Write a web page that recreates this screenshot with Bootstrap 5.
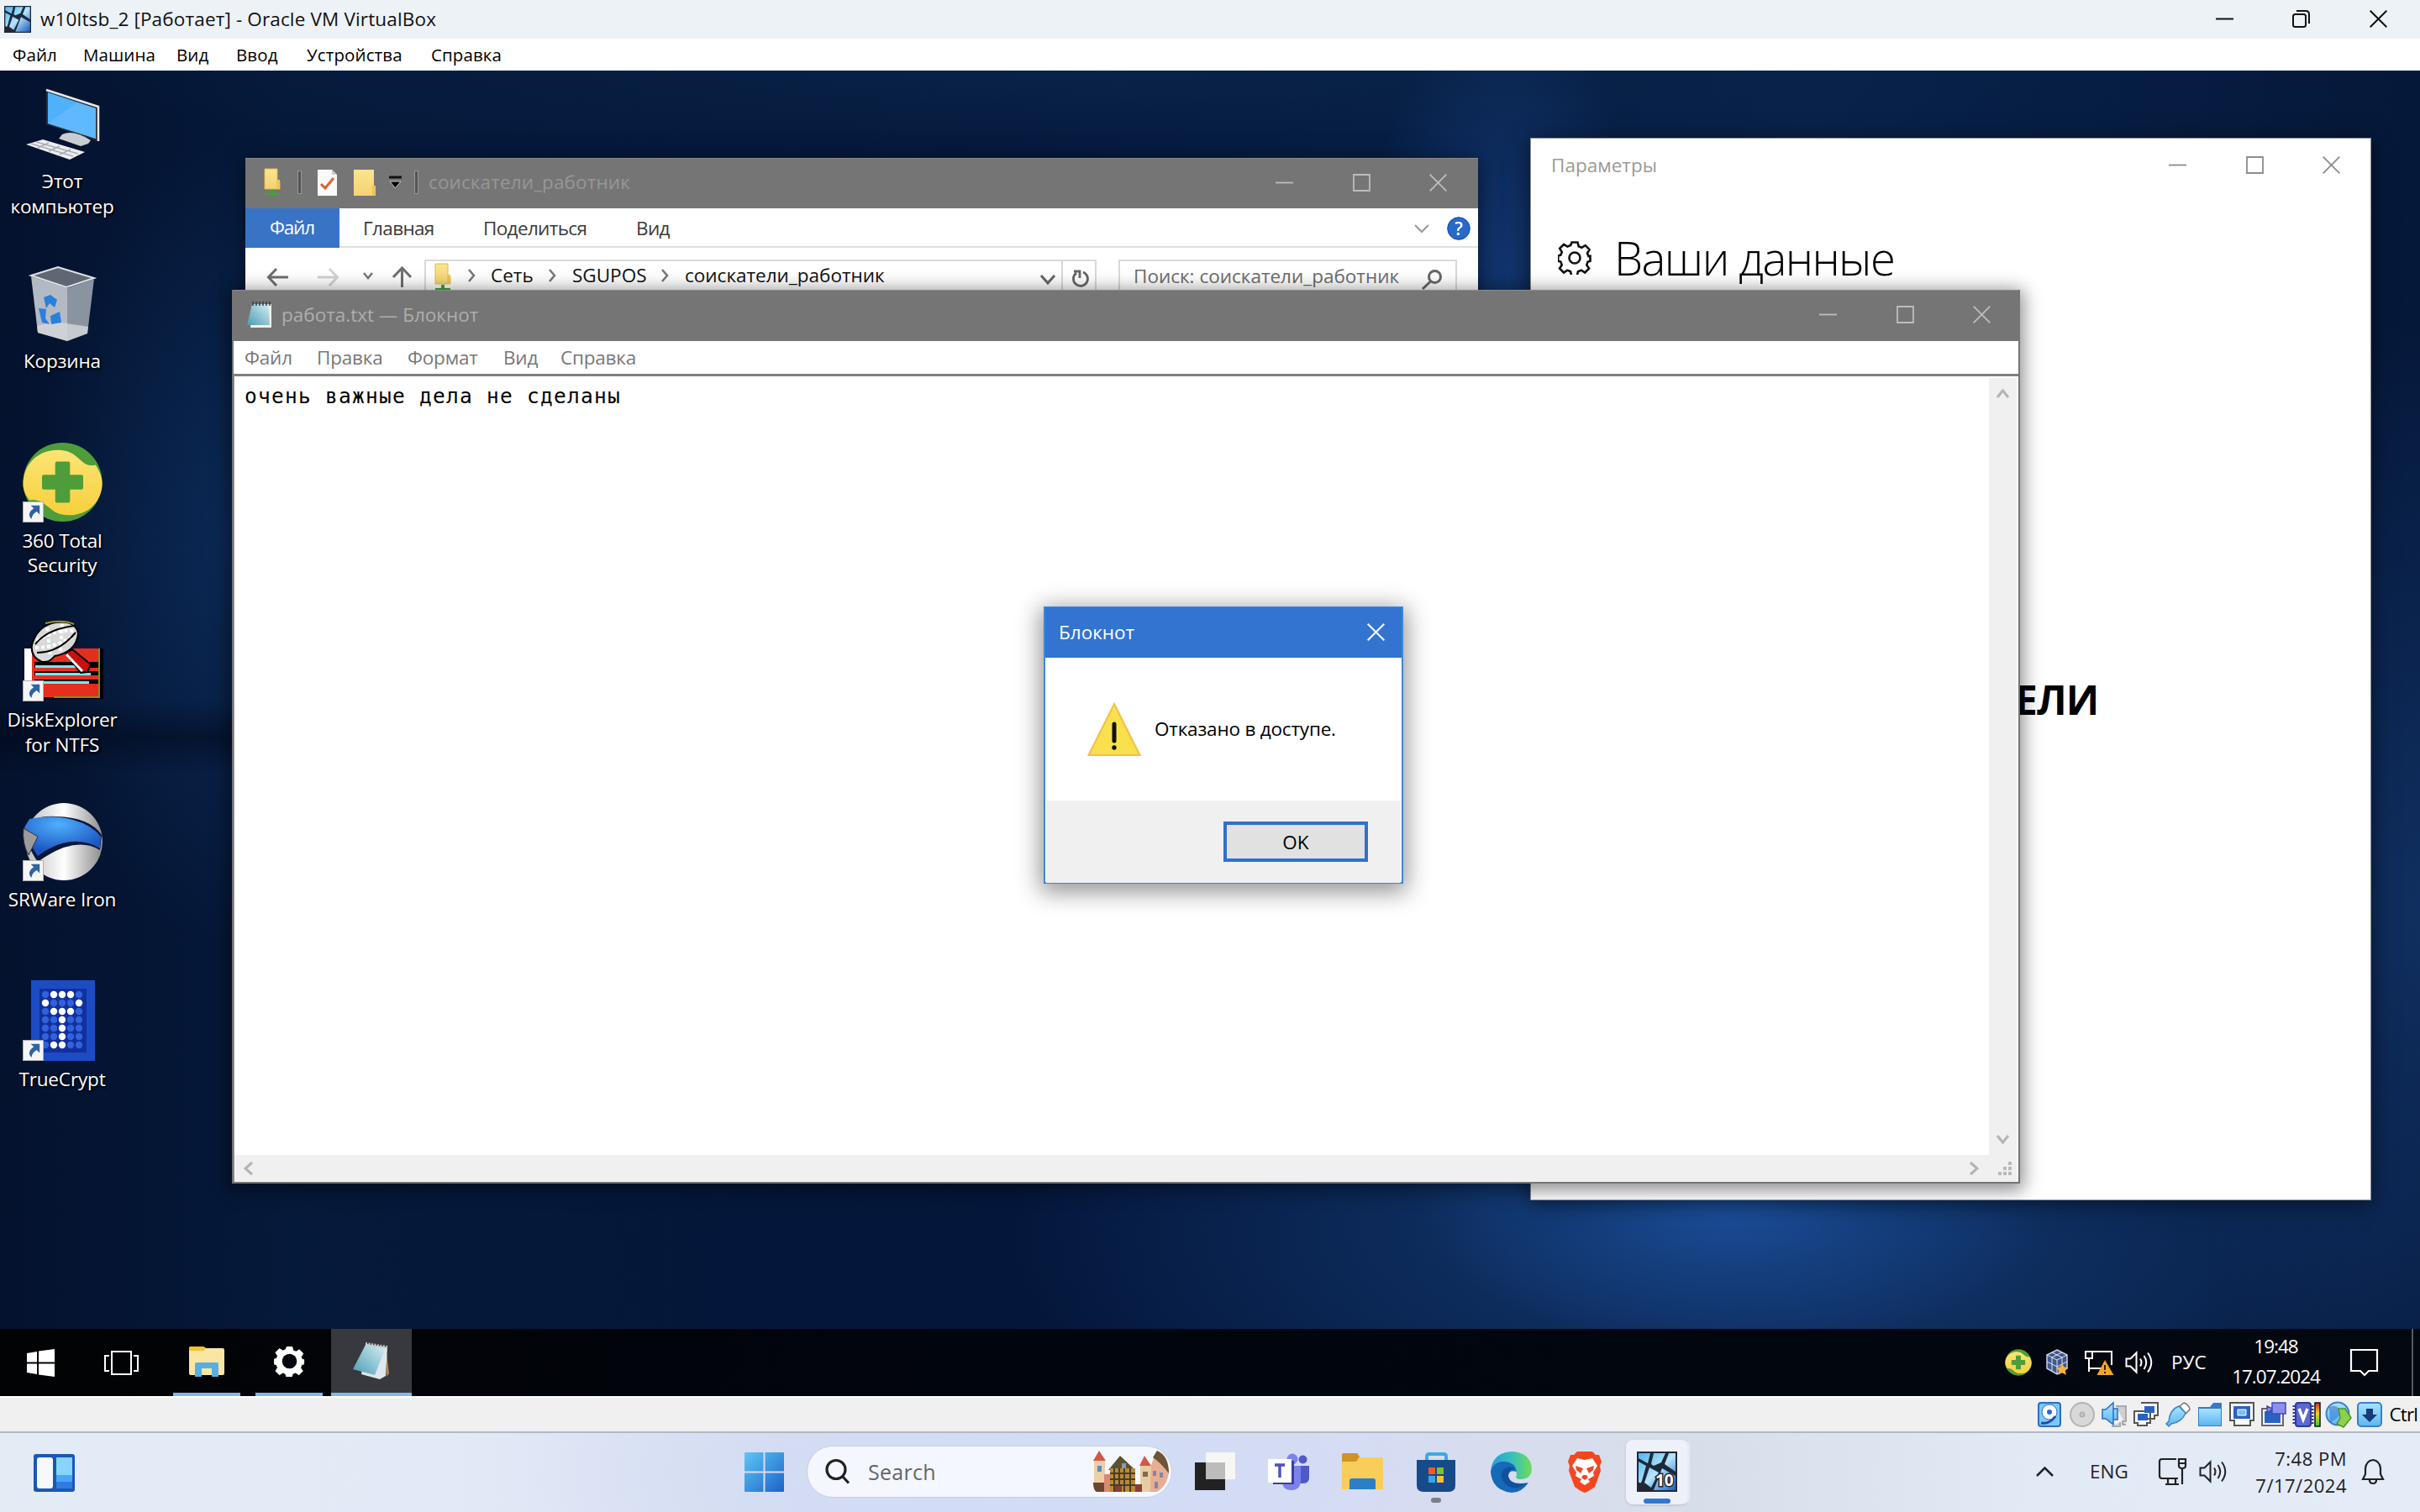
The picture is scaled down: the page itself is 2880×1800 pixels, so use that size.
<!DOCTYPE html>
<html lang="ru">
<head>
<meta charset="utf-8">
<title>w10ltsb_2 [Работает] - Oracle VM VirtualBox</title>
<link rel="stylesheet" href="https://cdn.jsdelivr.net/npm/bootstrap@5.3.0/dist/css/bootstrap.min.css">
<style>
body{width:2880px;height:1800px;overflow:hidden;font-family:"Open Sans","Noto Sans",sans-serif;font-size:22.5px;line-height:1.3;color:#111;letter-spacing:0}
svg{display:block;overflow:visible}
.rowgrid{display:grid;align-items:center;justify-items:start;white-space:nowrap}
.host-title{height:46px;background:#edf2f7;padding-left:5px;grid-template-columns:43px 2589px 91px 92px 30px;font-size:22.5px;letter-spacing:.15px;padding-bottom:1px}
.host-menu{height:38px;background:#fff;padding-left:15px;grid-template-columns:84px 111px 71px 84px 148px 100px;font-size:20.5px;letter-spacing:.1px;color:#000}
.desk{height:1498px;background:
 linear-gradient(180deg,transparent 50%,rgba(0,6,20,.45) 53%,transparent 56%) 0 0/290px 100% no-repeat,
 radial-gradient(ellipse 380px 180px at 2060px 1345px,#1c4f9c 0,rgba(24,70,140,.6) 45%,transparent 100%),
 radial-gradient(ellipse 900px 330px at 2100px 1380px,#12376f 0,transparent 100%),
 radial-gradient(ellipse 160px 330px at 1790px 240px,#12356e 0,transparent 100%),
 radial-gradient(ellipse 240px 480px at 280px 560px,#0b2955 0,transparent 100%),
 radial-gradient(ellipse 300px 700px at 2880px 1000px,#102f60 0,transparent 100%),
 radial-gradient(ellipse 1200px 120px at 1300px 0px,#092347 0,transparent 100%),
 linear-gradient(90deg,#04122e 0,#05193a 12%,#04163a 40%,#08224a 75%,#05183a 100%)}
.deskicons{position:absolute;left:0;top:14px;width:148px}
.deskcell{height:213.8px}
.deskcell .pic{height:96px;width:148px}
.deskcell .cap{margin-top:7px;line-height:29.5px;color:#fff;text-align:center;text-shadow:1px 2px 3px #000,0 0 3px #000;white-space:nowrap;letter-spacing:-.15px}
.win{position:absolute;background:#fff}
.winbtns{gap:70.5px;margin-left:auto;stroke:#bdbdbd;fill:none;stroke-width:1.8}
.w-exp{left:292px;top:104px;width:1467px;height:250px;box-shadow:0 4px 22px rgba(0,0,0,.5)}
.w-exp .winbtns{padding-right:37px}
.graybar{background:#757575;height:60px;border-top:1px solid #8b8b8b;padding-bottom:3px}
.exp-title{grid-template-columns:41px 24px 43px 42px 30px 17px 1fr auto;padding-left:21px;color:#979797;letter-spacing:.12px}
.exp-tabs{height:47px;border-bottom:2px solid #dfe0e0;grid-template-columns:140px 143px 182px 926px 39px 30px;color:#3a3a3a;letter-spacing:-.65px}
.exp-tabs .filetab{background:#3873c6;color:#fff;width:112px;height:47px;line-height:45px;padding-left:29px;letter-spacing:-1.2px}
.exp-nav{padding-left:26px;padding-top:14px;grid-template-columns:60px 54px 34px 39px 826px 403px;align-items:start}
.exp-nav>svg{margin-top:-1px}
.boxed{border:2px solid #d9d9d9;height:60px}
.addr{width:800px;grid-template-columns:40px 28px 68px 29px 105px 29px 423px 26px 24px;padding-left:9px;align-items:start;color:#111}
.addr>*{margin-top:2px}
.srchbox{width:403px;padding:3px 16px 0 16px;color:#6d6d6d}
.srchbox svg{margin-top:7px}
.w-note{left:276px;top:261px;width:2128px;height:1064px;box-shadow:0 4px 20px 4px rgba(0,0,0,.45);border:2px solid #757575;border-top:0}
.w-note .winbtns{padding-right:33px}
.note-title{grid-template-columns:41px 1fr auto;padding-left:16px;height:61px;color:#aeaeae}
.note-menu{height:39px;grid-template-columns:86px 108px 114px 68px 100px;padding-left:13px;color:#777;letter-spacing:-.2px}
.note-edit{border-top:3px solid #808080;height:962px;border-left:1px solid #9a9a9a}
.mono{font-family:"DejaVu Sans Mono",monospace;font-size:24.5px;letter-spacing:1.25px;color:#000;padding:4px 0 0 12px;line-height:40px}
.vscr{width:33px;background:#f0f0f0;margin-top:2px;margin-right:2px}
.hscr{height:32px;background:#f0f0f0;margin-right:2px;padding-bottom:1px}
.w-set{left:1821px;top:80px;width:1001px;height:1265px;border:1px solid #8c8f94;box-shadow:0 4px 24px rgba(0,0,0,.5)}
.set-title{height:66px;padding:0 0 3px 24px;color:#999}
.set-title .winbtns{stroke:#8c8c8c;padding-right:36px}
.set-head{margin-top:41px;padding-left:32px;grid-template-columns:67px 400px}
.bigtxt{font-size:54.5px;font-weight:300;letter-spacing:-1.6px;line-height:70px;color:#000}
.eli{font-size:48px;font-weight:700;letter-spacing:-.9px;line-height:60px;margin:461px 0 0 576px;color:#000}
.w-dlg{left:1242px;top:638px;width:428px;height:330px;border:2px solid #3f86d6;box-shadow:0 6px 26px 4px rgba(0,0,0,.42);color:#000}
.dlg-title{height:60px;background:#3274d0;color:#fff;grid-template-columns:367px 30px;padding-left:16px;margin-top:-1px;padding-bottom:1px}
.dlg-body{height:170px;grid-template-columns:80px 1fr;padding-left:50px;letter-spacing:-.2px}
.dlg-foot{background:#f0f0f0;height:98px;margin:0 1px;padding:25px 39px 0 0}
.okb{width:172px;height:48px;border:4px solid #3071cd;background:#e1e1e1;line-height:37px;text-align:center;padding:0;border-radius:0;font-size:22.5px;color:#000}
.vmbar{height:80px;background:linear-gradient(90deg,#020304,#01050e 40%,#02060f 80%,#04080f);color:#fff}
.vmleft{grid-template-columns:92px 82px 98px 90px 96px;padding-left:32px;height:80px}
.tsk{height:80px;display:flex;align-items:center;justify-content:center;border-bottom:4px solid #82b6ee;width:80px}
.tsk.on{background:#37393e;width:96px}
.vmright{grid-template-columns:49px 46px 48px 55px 72px 141px 73px 10px;height:80px;color:#fff}
.clk{line-height:36px;text-align:center;width:105px;letter-spacing:-1px;padding-bottom:2px}
.stat{height:42px;background:#f0f0f0;border-top:2px solid #fff;grid-template-columns:repeat(11,38.05px) 36.5px;color:#000;letter-spacing:-.9px}
.hostbar{height:96px;border-top:2px solid #b3b8c3;background:radial-gradient(ellipse 560px 160px at 1180px 50px,#d0dcf6,transparent),linear-gradient(90deg,#e3ecf5 0,#e3eaf7 18%,#d8ddf0 32%,#d6dcf3 55%,#d8dee9 70%,#e2eaf6 84%,#e4ecf8 100%)}
.hb-left{width:886px;padding-left:40px}
.hb-mid{grid-template-columns:74px 462px 87px 88px 89px 88px 91px 70px 80px;height:92px}
.pill{width:435px;height:62px;border-radius:31px;background:#f4f7fd;border:1px solid #c9cfe0;grid-template-columns:51px 266px 93px;padding-left:21px;color:#666;font-size:25px;letter-spacing:.3px}
.hb-right{grid-template-columns:64px 82px 48px 67px 127px 69px;color:#222;height:92px}
.hclk{line-height:32px;width:109px;text-align:right;font-size:22px;letter-spacing:.5px}
.vmtile{width:73px;height:77px;background:#eef1f9;border-radius:8px;box-shadow:4px 0 0 -1px #e6eaf5,0 1px 3px #b9bfd0}
.tip{position:absolute;height:6px;border-radius:3px}
.tip.gr{left:17px;width:12px;bottom:9px;background:#7b7f8a}
.tip.blu{left:21px;width:32px;bottom:1px;background:#2f78d2}
</style>
<script src="https://cdn.jsdelivr.net/npm/bootstrap@5.3.0/dist/js/bootstrap.bundle.min.js"></script>
</head>
<body class="d-flex flex-column m-0">
<svg width="0" height="0" class="position-absolute"><defs>
 <linearGradient id="gsky" x1="0" y1="0" x2="1" y2="1"><stop offset="0" stop-color="#4fb4f0"/><stop offset=".5" stop-color="#b5e4fb"/><stop offset="1" stop-color="#1b5cc4"/></linearGradient>
 <linearGradient id="gfold" x1="0" y1="0" x2="0" y2="1"><stop offset="0" stop-color="#fbe58f"/><stop offset="1" stop-color="#f4d272"/></linearGradient>
 <linearGradient id="gwin" x1="0" y1="0" x2="1" y2="1"><stop offset="0" stop-color="#5ec6f8"/><stop offset="1" stop-color="#1b62c8"/></linearGradient>
 <linearGradient id="gnote" x1="0" y1="1" x2="1" y2="0"><stop offset="0" stop-color="#4b9bb0"/><stop offset="1" stop-color="#d6f0f6"/></linearGradient>
 <linearGradient id="gsil" x1="0" y1="0" x2="1" y2="0"><stop offset="0" stop-color="#b9b9b9"/><stop offset=".5" stop-color="#fff"/><stop offset="1" stop-color="#8b8b8b"/></linearGradient>
 <radialGradient id="gblue" cx=".45" cy=".2" r=".7"><stop offset="0" stop-color="#4fb0ff"/><stop offset="1" stop-color="#1b55c0"/></radialGradient>
 <linearGradient id="gylw" x1="0" y1="0" x2="0" y2="1"><stop offset="0" stop-color="#fde474"/><stop offset="1" stop-color="#f8cf3c"/></linearGradient>
 <linearGradient id="glb" x1="0" y1="0" x2="0" y2="1"><stop offset="0" stop-color="#a9e4ff"/><stop offset="1" stop-color="#5bb6f0"/></linearGradient>
 <linearGradient id="gedge" x1="0" y1=".3" x2="1" y2=".3"><stop offset="0" stop-color="#2a9bd8"/><stop offset=".5" stop-color="#35bfc0"/><stop offset="1" stop-color="#70dc58"/></linearGradient>
 <linearGradient id="grain" x1="0" y1="0" x2="0" y2="1"><stop offset="0" stop-color="#e32222"/><stop offset=".45" stop-color="#f5d020"/><stop offset="1" stop-color="#2fd02f"/></linearGradient>
 <symbol id="w10" viewBox="0 0 48 48"><rect width="48" height="48" fill="#1d2a3c"/><path d="M2 2h14l-3 12L2 8zM20 2h14l-5 11-9 4-3-2zM38 2h8v22L33 15zM2 12l9 5-5 18-4 6zM15 19l11 6-9 18-8-6zM30 20l16 9v17H20z" fill="url(#gsky)"/><path d="M0 35l20 13H0z" fill="#222731"/></symbol>
 <symbol id="min" viewBox="0 0 21 21"><path d="M0 10.5h21"/></symbol>
 <symbol id="max" viewBox="0 0 21 21"><path d="M1 1h19v19H1z"/></symbol>
 <symbol id="cls" viewBox="0 0 21 21"><path d="M.7.7l19.6 19.6M20.3.7L.7 20.3"/></symbol>
 <symbol id="netf" viewBox="0 0 22 34"><path d="M2 1h15v14l3 1v9H2z" fill="url(#gfold)" stroke="#e0b94c"/><path d="M16 14h4v11h-4z" fill="#efc85a"/><path d="M9 26h4v4h7v3H2v-3h7z" fill="#3fa535"/></symbol>
 <symbol id="short" viewBox="0 0 26 26"><rect x=".5" y=".5" width="25" height="25" fill="#f5f5f5" stroke="#b0b0b0"/><path d="M10 5h11v11l-3.6-3.6c-4 2.500-6 5-6.400 9.100-3.200-2-5-8 2.700-12.800z" fill="#2f62a5"/></symbol>
 <symbol id="s360" viewBox="0 0 98 98"><circle cx="49" cy="49" r="48" fill="#4e9d3a"/><path d="M1 52C1 20 30 4 56 12c14 5 18 20 33 16 6 9 9 18 8 26-3 26-26 39-50 34-14-3-22-21-38-17C4 65 1 58 1 52z" fill="url(#gylw)"/><path d="M42 26h14v16h16v14H56v16H42V56H26V42h16z" fill="#4e9d3a" stroke="#4e9d3a" stroke-width="4" stroke-linejoin="round"/></symbol>
 <symbol id="gear" viewBox="-20 -20 40 40"><path d="M-3.500-18.500h7l1.200 4.800 3.600 1.500 4.400-2.600 4.900 4.900-2.600 4.300 1.500 3.600 2-.2v6l-3 .9-1.200 3.900 2.800 4-4.900 4.900-4.300-2.800-3.900 1.500-1.200 5h-6.600l-1.200-5-3.600-1.500-4.400 2.800-4.900-4.900 2.700-4.300-1.500-3.800-3-.7v-6.400l3.100-.8 1.400-3.400-2.600-4.400 4.900-4.900 4.300 2.600 3.800-1.500z"/></symbol>
 <symbol id="vol" viewBox="0 0 34 28"><path d="M1.500 9.500h5l7-7v23l-7-7h-5zM18 9.500q3 4.500 0 9M22.500 6q5.500 8 0 16M27 2.500q8.500 11.500 0 23" fill="none" stroke-width="2"/></symbol>
 <symbol id="notep" viewBox="0 0 30 32"><path d="M7 3h22v28H4z" fill="#f4f0e2"/><path d="M6 3h20l1 25H0z" fill="url(#gnote)"/><path d="M7 0v5M11 0v5M15 0v5M19 0v5M23 0v5M27 0v5" stroke="#333" stroke-width="1.400"/></symbol>
 <symbol id="chev" viewBox="0 0 10 30"><path d="M2 8l6 7-6 7" fill="none" stroke="#777" stroke-width="2.500"/></symbol>
</defs></svg>

<header class="rowgrid host-title">
 <svg width="32" height="32"><use href="#w10"/></svg>
 <span>w10ltsb_2 [Работает] - Oracle VM VirtualBox</span>
 <svg width="21" height="21" stroke="#111" stroke-width="2"><use href="#min"/></svg>
 <svg width="21" height="21" viewBox="0 0 21 21" fill="none" stroke="#111" stroke-width="2"><rect x="1" y="5" width="15" height="15" rx="2.500"/><path d="M5 1h11q4 0 4 4v11"/></svg>
 <svg width="21" height="21" stroke="#111" stroke-width="2"><use href="#cls"/></svg>
</header>
<nav class="rowgrid host-menu">
 <span>Файл</span><span>Машина</span><span>Вид</span><span>Ввод</span><span>Устройства</span><span>Справка</span>
</nav>

<main class="desk position-relative overflow-hidden">
 <div class="deskicons d-flex flex-column">
  <div class="deskcell"><svg class="pic" viewBox="0 0 148 96">
   <path d="M55 8l62 20v42L55 50z" fill="#2b3138"/><path d="M57 12l57 19v36L57 49z" fill="#4fb0fb"/><path d="M57 49L92 24l22 7v36z" fill="#6cc0ff" opacity=".6"/><path d="M55 9l62 20v41" fill="none" stroke="#e6e8ea" stroke-width="2.500"/>
   <path d="M74 62q13-6 34 7l-3 4-9 3-26-9z" fill="#c9cdd2"/><path d="M31 74l20-6 50 15-18 9z" fill="#eceef0"/><path d="M37 73l50 15M43 71l50 14M45 78l13-6M58 82l13-6M71 86l13-6" stroke="#a9adb3" stroke-width="1.500"/></svg>
   <div class="cap">Этот<br>компьютер</div></div>
  <div class="deskcell"><svg class="pic" viewBox="0 0 148 96">
   <path d="M37 16L69 6l43 13-33 11z" fill="#5f6872" stroke="#dfe3e8" stroke-width="2"/><path d="M37 17l43 14v63L45 84z" fill="#b3bac3"/><path d="M80 31l32-11-8 65-24 9z" fill="#8a94a0"/><path d="M44 76l22-5 39 6-1 8-24 9-35-10z" fill="#d5d8dc" opacity=".8"/>
   <path d="M52 42l8-3 8 6-3 9-6-5-4 6zM46 55l9 1-1 11 5 7-9-2zM60 64l11-5 2 13-12 2z" fill="#2a7fdc"/></svg>
   <div class="cap">Корзина</div></div>
  <div class="deskcell"><svg class="pic" viewBox="0 0 148 96"><use href="#s360" x="26" y="0" width="97" height="96"/><use href="#short" x="27" y="71" width="25" height="25"/></svg>
   <div class="cap">360 Total<br>Security</div></div>
  <div class="deskcell"><svg class="pic" viewBox="0 0 148 96">
   <path d="M29 33h94v60H29z" fill="#000"/><path d="M29 33h89v58H32z" fill="#e62e20"/><path d="M29 33h9v50h-9z" fill="#fff"/><path d="M41 49h78v7H41zM41 60h78v5H41zM41 70h78v5H41z" fill="#000"/><path d="M42 53h60v3H42zM42 62h66v3H42zM42 72h64v3H42z" fill="#7fe6ea"/><path d="M118 33v58H64" fill="none" stroke="#8a8a20" stroke-width="2"/>
   <path d="M38 29Q44 6 66 2q24-3 27 13-2 22-28 27-6 8-15 7-14-6-12-20z" fill="#d9d9d9" stroke="#000" stroke-width="2"/><path d="M44 24q20-14 44-12M42 32q24 0 46-14M56 8l4 34M74 4l-2 32" fill="none" stroke="#fff" stroke-width="4" stroke-dasharray="4 3"/><path d="M42 28q14-18 46-22M44 38q26 0 46-24" fill="none" stroke="#000" stroke-width="2"/><path d="M54 3Q74-2 88 4" stroke="#9a9a20" fill="none" stroke-width="2"/>
   <path d="M78 38l8-4 22 18-4 9-8 1z" fill="#c81010" stroke="#000" stroke-width="2"/><path d="M79 40l19 20" stroke="#fff" stroke-width="3"/><use href="#short" x="27" y="71" width="25" height="25"/></svg>
   <div class="cap">DiskExplorer<br>for NTFS</div></div>
  <div class="deskcell"><svg class="pic" viewBox="0 0 148 96">
   <circle cx="76" cy="49" r="46" fill="url(#gsil)"/><path d="M27 35q10-18 40-16 40 1 54 22l-2 18q-30-18-74 14-8-10-18-38z" fill="#08183c"/><path d="M35 22q26-6 52 1 22 6 33 20l-1 14q-34-20-74 9-10-14-16-34z" fill="url(#gblue)"/><path d="M28 33l17 10-11 22q-8-14-6-32z" fill="#9c9c9c" stroke="#333"/><use href="#short" x="27" y="71" width="25" height="25"/></svg>
   <div class="cap">SRWare Iron</div></div>
  <div class="deskcell"><svg class="pic" viewBox="0 0 148 96"><rect x="37" y="0" width="76" height="96" fill="#1d4bc4"/><rect x="47" y="10" width="56" height="76" fill="#12309b"/>
   <g id="dots"></g><use href="#short" x="27" y="71" width="25" height="25"/></svg>
   <div class="cap">TrueCrypt</div></div>
 </div>

 <section class="win w-set">
  <div class="set-title d-flex align-items-center"><span>Параметры</span>
   <div class="winbtns d-flex"><svg width="21" height="21"><use href="#min"/></svg><svg width="21" height="21"><use href="#max"/></svg><svg width="21" height="21"><use href="#cls"/></svg></div></div>
  <div class="rowgrid set-head"><svg width="40" height="40" viewBox="-20 -20 40 40" fill="none" stroke="#111" stroke-width="2.600"><use href="#gear" x="-20" y="-20" width="40" height="40"/><circle r="6.500"/></svg><span class="bigtxt">Ваши данные</span></div>
  <div class="eli">ЕЛИ</div>
 </section>

 <section class="win w-exp">
  <div class="rowgrid graybar exp-title">
   <svg width="22" height="34"><use href="#netf"/></svg>
   <svg width="5" height="28" viewBox="0 0 5 28"><rect x=".5" y=".5" width="4" height="27" fill="#555" stroke="#999"/></svg>
   <svg width="23" height="31" viewBox="0 0 23 31"><path d="M0 0h17l6 6v25H0z" fill="#fafafa"/><path d="M17 0v6h6" fill="#ccc"/><path d="M4 17l5 5L19 10" fill="none" stroke="#e06030" stroke-width="3"/></svg>
   <svg width="26" height="33" viewBox="0 0 26 33"><path d="M0 1h24v19l2 1v11H0z" fill="url(#gfold)"/><path d="M22 20h4v12h-4z" fill="#edc456"/></svg>
   <svg width="15" height="16" viewBox="0 0 15 16"><path d="M0 2h15" stroke="#111" stroke-width="3"/><path d="M1 7h13l-6.500 8z" fill="#000" stroke="#ccc"/></svg>
   <svg width="5" height="28" viewBox="0 0 5 28"><rect x=".5" y=".5" width="4" height="27" fill="#555" stroke="#999"/></svg>
   <span>соискатели_работник</span>
   <div class="winbtns d-flex"><svg width="21" height="21"><use href="#min"/></svg><svg width="21" height="21"><use href="#max"/></svg><svg width="21" height="21"><use href="#cls"/></svg></div>
  </div>
  <div class="rowgrid exp-tabs">
   <span class="filetab">Файл</span><span>Главная</span><span>Поделиться</span><span>Вид</span>
   <svg width="18" height="10" viewBox="0 0 18 10"><path d="M1 1l8 8 8-8" fill="none" stroke="#999" stroke-width="2"/></svg>
   <svg width="28" height="28" viewBox="0 0 28 28"><circle cx="14" cy="14" r="13.300" fill="#2869cc" stroke="#164a9c"/><text x="14" y="21.500" text-anchor="middle" font-size="21" font-weight="600" fill="#fff" letter-spacing="0">?</text></svg>
  </div>
  <div class="rowgrid exp-nav">
   <svg width="25" height="44" viewBox="0 0 25 44" fill="none" stroke="#6f6f6f" stroke-width="3"><path d="M1 22h24M11 12L1.500 22l9.500 10"/></svg>
   <svg width="25" height="44" viewBox="0 0 25 44" fill="none" stroke="#d2d2d2" stroke-width="3"><path d="M0 22h24M14 12l9.500 10L14 32"/></svg>
   <svg width="12" height="44" viewBox="0 0 12 44" fill="none" stroke="#777" stroke-width="2.500"><path d="M1 17l5 6 5-6"/></svg>
   <svg width="25" height="44" viewBox="0 0 25 44" fill="none" stroke="#6f6f6f" stroke-width="3"><path d="M12.500 34V11M2 22l10.500-11L23 22"/></svg>
   <div class="rowgrid boxed addr">
    <svg width="22" height="34"><use href="#netf"/></svg>
    <svg width="10" height="30"><use href="#chev"/></svg><span>Сеть</span>
    <svg width="10" height="30"><use href="#chev"/></svg><span>SGUPOS</span>
    <svg width="10" height="30"><use href="#chev"/></svg><span>соискатели_работник</span>
    <svg width="18" height="34" viewBox="0 0 18 34"><path d="M1 15l8 9 8-9" fill="none" stroke="#666" stroke-width="3"/></svg>
    <svg width="34" height="34" viewBox="0 0 34 34" fill="none"><path d="M0-4v50" stroke="#d9d9d9" stroke-width="2"/><path d="M17 12a8.500 8.500 0 1 0 8-1M14 10h7v8" stroke="#666" stroke-width="2.800"/></svg>
   </div>
   <div class="boxed srchbox d-flex justify-content-between"><span>Поиск: соискатели_работник</span><svg width="24" height="24" viewBox="0 0 24 24" fill="none" stroke="#666" stroke-width="3"><circle cx="15.500" cy="8.500" r="7"/><path d="M10.500 14L1 23"/></svg></div>
  </div>
 </section>

 <section class="win w-note">
  <div class="rowgrid graybar note-title">
   <svg width="30" height="32"><use href="#notep"/></svg><span>работа.txt — Блокнот</span>
   <div class="winbtns d-flex"><svg width="21" height="21"><use href="#min"/></svg><svg width="21" height="21"><use href="#max"/></svg><svg width="21" height="21"><use href="#cls"/></svg></div>
  </div>
  <div class="rowgrid note-menu"><span>Файл</span><span>Правка</span><span>Формат</span><span>Вид</span><span>Справка</span></div>
  <div class="note-edit d-flex flex-column">
   <div class="d-flex flex-grow-1"><div class="mono flex-grow-1">очень важные дела не сделаны</div>
    <div class="vscr d-flex flex-column justify-content-between align-items-center py-2"><svg width="15" height="14" viewBox="0 0 15 14" class="mt-1"><path d="M1 11l6.500-8L14 11" fill="none" stroke="#b4b4b4" stroke-width="3"/></svg><svg width="15" height="14" viewBox="0 0 15 14" class="mb-1"><path d="M1 3l6.500 8L14 3" fill="none" stroke="#b4b4b4" stroke-width="3"/></svg></div></div>
   <div class="hscr d-flex align-items-center"><svg width="12" height="16" viewBox="0 0 12 16" class="ms-2"><path d="M13 1L5 8l8 7" fill="none" stroke="#b4b4b4" stroke-width="3"/></svg>
    <svg width="12" height="16" viewBox="0 0 12 16" class="ms-auto"><path d="M1 1l8 7-8 7" fill="none" stroke="#b4b4b4" stroke-width="3"/></svg>
    <svg width="44" height="20" viewBox="0 0 44 20" fill="#b9b9b9"><path d="M34 2h4v4h-4zM34 8h4v4h-4zM34 14h4v4h-4zM28 8h4v4h-4zM28 14h4v4h-4zM22 14h4v4h-4z"/></svg></div>
  </div>
 </section>

 <section class="win w-dlg">
  <div class="rowgrid dlg-title"><span>Блокнот</span><svg width="21" height="21" stroke="#fff" stroke-width="2"><use href="#cls"/></svg></div>
  <div class="rowgrid dlg-body"><svg width="64" height="64" viewBox="0 0 64 64"><path d="M32 2l30.500 61H1.500z" fill="#f9e04c" stroke="#f5bd4a" stroke-width="2"/><path d="M32 26v20" stroke="#111" stroke-width="5" stroke-linecap="round"/><circle cx="32" cy="54" r="2.700" fill="#111"/></svg><span>Отказано в доступе.</span></div>
  <div class="dlg-foot d-flex justify-content-end"><button class="btn okb">OK</button></div>
 </section>
</main>

<div class="vmbar d-flex justify-content-between">
 <div class="rowgrid vmleft">
  <svg width="33" height="33" viewBox="0 0 33 33" fill="#fff"><path d="M0 5l12-2v12.500H0zM14 2.600L33 0v15.500H14zM0 17.500h12V30L0 28zM14 17.500h19V33l-19-2.600z"/></svg>
  <svg width="41" height="29" viewBox="0 0 41 29" fill="none" stroke="#fff" stroke-width="2"><path d="M9 1h23v27H9zM6 6H1v18h5M35 6h5v18h-5"/></svg>
  <div class="tsk"><svg width="44" height="37" viewBox="0 0 44 37"><path d="M1 3q0-2 2-2h15l3 2h20q2 0 2 2v28q0 2-2 2H3q-2 0-2-2z" fill="#fae6a0"/><path d="M1 6V3q0-2 2-2h15l3 2-3 3z" fill="#f2c230"/><path d="M8 37V22q0-2 2-2h24q2 0 2 2v15h-8V27H16v10z" fill="#57aee4"/></svg></div>
  <div class="tsk"><svg width="37" height="37" viewBox="-20 -20 40 40" fill="none" stroke="#fff"><use href="#gear" x="-20" y="-20" width="40" height="40" fill="#fff"/><circle r="9.500" fill="#01040b" stroke="none"/></svg></div>
  <div class="tsk on"><svg width="46" height="44" viewBox="0 0 46 44"><path d="M40 4l4 33-3 4z" fill="#b6873a"/><path d="M17 2l25 4-2 34-7 4-22-6z" fill="#dfe6ee"/><path d="M16 3l24 3-13 33L1 32z" fill="url(#gnote)"/><path d="M16 2l26 4" stroke="#c8c8c8" stroke-width="4" stroke-dasharray="2 1.500"/></svg></div>
 </div>
 <div class="rowgrid vmright">
  <svg width="32" height="32"><use href="#s360"/></svg>
  <svg width="27" height="32" viewBox="0 0 27 32"><path d="M13 1l12 6v16l-12 7L1 23V7z" fill="#40588c" stroke="#c6d2ea" stroke-width="1.500"/><path d="M1 7l12 6 12-6M13 13v17M7 4l12 6v16M19 4L7 10v16M1 15l12 6 12-6" stroke="#dfe7f5" fill="none"/><path d="M19 17l2.500 4.500 5 .6-3.600 3.400 1 5.200-4.900-2.400-4.600 2.400.9-5.200-3.600-3.400 5-.6z" fill="#f5b040"/></svg>
  <svg width="34" height="29" viewBox="0 0 34 29" fill="none" stroke="#fff" stroke-width="2"><path d="M1 1h8v8H1zM5 9v16M9 1h23v16M5 21h14"/><path d="M24 11l10.500 18h-20z" fill="#f5a623" stroke="none"/><path d="M24 17v6M24 25v2" stroke="#222"/></svg>
  <svg width="34" height="28" stroke="#fff"><use href="#vol"/></svg>
  <span>РУС</span>
  <div class="clk">19:48<br>17.07.2024</div>
  <svg width="33" height="33" viewBox="0 0 33 33" fill="none" stroke="#fff" stroke-width="2.200"><path d="M1 1h31v25H22l-5 5-5-5H1z"/></svg>
  <svg width="2" height="80"><rect width="2" height="80" fill="#555a62"/></svg>
 </div>
</div>

<div class="d-flex"><div class="flex-grow-1 stat"></div>
<div class="rowgrid stat">
 <svg width="28" height="30" viewBox="0 0 28 30"><rect x="1" y="1" width="26" height="28" rx="3" fill="#7cc8f8" stroke="#2d6bc4" stroke-width="2"/><circle cx="14" cy="12" r="9" fill="#fff" stroke="#2d6bc4"/><circle cx="14" cy="12" r="3" fill="#2d6bc4"/><path d="M4 25q10 2 17-8" stroke="#1d4fa0" stroke-width="3" fill="none"/></svg>
 <svg width="30" height="30" viewBox="0 0 30 30"><circle cx="15" cy="15" r="14" fill="#d8d8d8" stroke="#b4b4b4" stroke-width="2"/><circle cx="15" cy="15" r="3" fill="#c0c0c0" stroke="#a5a5a5"/></svg>
 <svg width="30" height="30" viewBox="0 0 30 30"><path d="M17 5h12v18h-4v4h4M12 29h10v-5" fill="#cfcfcf" stroke="#aaa" stroke-width="2"/><path d="M1 9h4l9-8v26l-9-7H1zM14 8h5v13h-5" fill="url(#glb)" stroke="#2d6bc4" stroke-width="1.500"/></svg>
 <svg width="30" height="30" viewBox="0 0 30 30"><path d="M9 1h20v15h-4v4h-9M1 11h19v14h-4v3H5v-3H1z" fill="#fff" stroke="#555" stroke-width="2"/><path d="M13 5h12v8H13zM5 14h12v8H5z" fill="#2a62c4"/></svg>
 <svg width="30" height="30" viewBox="0 0 30 30"><path d="M17 5l5-4q6 2 7 8l-5 5z" fill="#fff" stroke="#777" stroke-width="1.500"/><path d="M16 5l8 8q-4 11-17 13l-3 3-3-3 3-3Q5 9 16 5z" fill="url(#glb)" stroke="#3f7fc4" stroke-width="1.500"/></svg>
 <svg width="30" height="30" viewBox="0 0 30 30"><path d="M1 29V6h14l4-5h10v28z" fill="#3a78d0"/><path d="M2 8h26v20H2z" fill="url(#glb)"/></svg>
 <svg width="30" height="30" viewBox="0 0 30 30"><path d="M1 1h28v21h-4v6H6v-6H1z" fill="#fff" stroke="#555" stroke-width="2"/><path d="M5 5h20v15H5z" fill="#2a62c4"/><path d="M10 9h10v7H10z" fill="#7cc0f4" stroke="#fff"/></svg>
 <svg width="30" height="30" viewBox="0 0 30 30"><path d="M1 8h25v20H1z" fill="#fff" stroke="#666" stroke-width="2"/><path d="M4 11h19v14H4z" fill="#2a62c4"/><path d="M7 5l6 3V1h16v13H13V9l-6 4z" fill="#8a90ee" stroke="#4049b0" stroke-width="1.500"/></svg>
 <svg width="32" height="30" viewBox="0 0 32 30"><rect x="3" y="1" width="18" height="28" rx="3" fill="#5a68d0" stroke="#2f3a9c" stroke-width="2"/><path d="M1 4v23M23 4v23" stroke="#2f3a9c" stroke-width="3" stroke-dasharray="2 2"/><path d="M7 8l5 13 5-13" fill="none" stroke="#fff" stroke-width="3.500"/><rect x="26" y="1" width="6" height="28" fill="url(#grain)" stroke="#111" stroke-width="1.500"/></svg>
 <svg width="32" height="30" viewBox="0 0 32 30"><circle cx="15" cy="14" r="13.500" fill="url(#glb)" stroke="#3a7fd0" stroke-width="2"/><path d="M5 6Q14 2 17 10T6 24" fill="#3a78d0" opacity=".6"/><path d="M16 8h8l7 11-9 11-8-4 4-7z" fill="#8ed04a" stroke="#4b9428" stroke-width="1.500"/></svg>
 <svg width="30" height="30" viewBox="0 0 30 30"><rect x="1" y="1" width="28" height="28" rx="4" fill="url(#glb)" stroke="#3a7fd0" stroke-width="2"/><path d="M11 8h8v7h5l-9 9-9-9h5z" fill="#16397c"/></svg>
 <span>Ctrl</span>
</div></div>

<footer class="hostbar d-flex">
 <div class="hb-left d-flex align-items-center"><svg width="49" height="45" viewBox="0 0 49 45"><rect width="49" height="45" rx="3" fill="#1b58b4"/><rect x="4" y="4" width="19" height="37" rx="3" fill="#f7f8fa"/><path d="M27 4h19v21H27z" fill="#87d5fb"/><path d="M27 25h19v8H27z" fill="#4ba5f6"/><path d="M27 33h19v8H27z" fill="#2f7be0"/></svg></div>
 <div class="rowgrid hb-mid">
  <svg width="47" height="47" viewBox="0 0 47 47"><path d="M0 1q0-1 1-1h21.500v22.500H0zM24.500 0H46q1 0 1 1v21.500H24.500zM0 24.500h22.500V47H1q-1 0-1-1zM24.500 24.500H47V46q0 1-1 1H24.500z" fill="url(#gwin)"/></svg>
  <div class="rowgrid pill"><svg width="29" height="30" viewBox="0 0 29 30" fill="none" stroke="#222" stroke-width="3.200"><circle cx="13" cy="12.500" r="11"/><path d="M20.500 20.500L28 28.500"/></svg><span>Search</span>
   <svg width="94" height="50" viewBox="0 0 94 50"><path d="M2 12l7-12 8 12z" fill="#d0584a"/><path d="M3 12h13v34H3z" fill="#eccfa8"/><path d="M7 18h5v7H7z" fill="#5a8fc0"/><path d="M2 38h18v11H6q-4-2-4-11z" fill="#6b4434"/><path d="M15 28h12v21H15z" fill="#d98a72"/><path d="M20 23L34 6l18 17z" fill="#5c5232"/><path d="M22 21h30v28H22z" fill="#b88a35"/><path d="M22 27h30M22 34h30M22 41h30M27 21v28M33 21v28M39 21v28M46 21v28" stroke="#4a3c28" stroke-width="2"/><path d="M36 15h5v6h-5z" fill="#7fa0b8"/><path d="M57 18l6-12 8 12z" fill="#cf5a48"/><path d="M58 18h13v31H58z" fill="#e6cda4"/><path d="M61 25h6v6h-6z" fill="#87684c"/><path d="M71 17L77 1q14 2 15 25-2 16-14 23h-8z" fill="#e9ad93"/><path d="M73 8l5-8q14 6 14 27-9-12-19-19z" fill="#6e5436"/><path d="M73 24h4v6h-4zM81 26h4v6h-4zM75 37h4v8h-4z" fill="#7d88a8"/><path d="M28 42h8v7h-8zM52 40h8v9h-8z" fill="#8e3b34"/></svg></div>
  <svg width="48" height="46" viewBox="0 0 48 46"><path d="M0 12h36v33H0z" fill="#222"/><rect x="13" y="0" width="35" height="32" rx="1" fill="#f6f6f4"/><path d="M13 12h23v20H13z" fill="#bcbcbc"/></svg>
  <svg width="49" height="44" viewBox="0 0 49 44"><circle cx="29" cy="7" r="6.500" fill="#7b83eb"/><circle cx="41.500" cy="7.500" r="5" fill="#5059c9"/><path d="M35 15h14v14q0 7-7 7h-7z" fill="#5059c9"/><path d="M17 15h22v17q0 12-11 12T17 34z" fill="#7b83eb"/><path d="M6 9h25v28H6z" fill="#3a409a"/><path d="M0 7h28v28H0z" fill="#fff"/><path d="M8 14h12M14 14v15" stroke="#4b53bc" stroke-width="3.500"/></svg>
  <svg width="49" height="44" viewBox="0 0 49 44"><path d="M0 2q0-2 2-2h16l4 5h25q2 0 2 2v36H0z" fill="#f8cd58"/><path d="M0 10V2q0-2 2-2h16l3 4-4 6z" fill="#cf9426"/><path d="M9 43V33q0-3 3-3h25q3 0 3 3v10z" fill="#2b7fc8"/></svg>
  <div class="position-relative d-flex align-items-center h-100"><svg width="46" height="47" viewBox="0 0 46 47"><path d="M12 12V5q0-3 3-3h17q3 0 3 3v7" fill="none" stroke="#3aaae8" stroke-width="4"/><path d="M0 9h46v30q0 8-8 8H8q-8 0-8-8z" fill="#174a88"/><path d="M14 18h8v8h-8z" fill="#f05a28"/><path d="M24 18h8v8h-8z" fill="#80c030"/><path d="M14 28h8v8h-8z" fill="#3aa5ee"/><path d="M24 28h8v8h-8z" fill="#fcc030"/></svg><span class="tip gr"></span></div>
  <svg width="49" height="49" viewBox="0 0 49 49"><path d="M0 24Q2 1 25 0q22 1 24 20 0 13-14 13-7-1-4-5 0-8-8-10Q6 12 0 24z" fill="url(#gedge)"/><path d="M0 24q4-13 17-12 12 1 14 12-9-3-10 5 2 12 24 8-8 12-20 12Q2 47 0 24z" fill="#1668b8"/><path d="M14 23q7-8 15-2-9-1-8 9 3 11 22 8-16 11-27-1-5-7-2-14z" fill="#10509c"/></svg>
  <svg width="42" height="49" viewBox="0 0 42 49"><path d="M12 0h18l4 4h4l3 8-2 5 1 6-7 19q-8 6-12 7-4-1-12-7L2 23l1-6-2-5 3-8h4z" fill="#f4471f"/><path d="M12 8l9 2 9-2 6 9-5 8 1 4-7 4 2 3-6 4-6-4 2-3-7-4 1-4-5-8z" fill="#fff"/><path d="M10 17l9 3-3 6-5-4zM32 17l-9 3 3 6 5-4zM19 28h4l2 3-4 3-4-3z" fill="#f4471f"/></svg>
  <div class="vmtile position-relative d-flex align-items-center justify-content-center"><svg width="48" height="48" viewBox="0 0 48 48"><use href="#w10" width="48" height="48"/><text x="22" y="41" font-size="19" font-weight="700" fill="#fff" stroke="#222" stroke-width="3" paint-order="stroke" letter-spacing="0">10</text></svg><span class="tip blu"></span></div>
 </div>
 <div class="rowgrid hb-right ms-auto">
  <svg width="21" height="12" viewBox="0 0 21 12"><path d="M1 11L10.500 1.500 20 11" fill="none" stroke="#222" stroke-width="2.500"/></svg>
  <span>ENG</span>
  <svg width="33" height="32" viewBox="0 0 33 32" fill="none" stroke="#222" stroke-width="2.200"><path d="M21 1H4Q1 1 1 4v17q0 3 3 3h19M8 31h16M11 25v5M20 25v5M24 1h8v8q0 3-4 3t-4-3zM28 12v19M24 6h8"/></svg>
  <svg width="34" height="28" stroke="#222"><use href="#vol"/></svg>
  <div class="hclk">7:48 PM<br>7/17/2024</div>
  <svg width="26" height="30" viewBox="0 0 26 30" fill="none" stroke="#222" stroke-width="2.200"><path d="M1 24l3-6v-7q1-9 9-10 8 1 9 10v7l3 6zM9 25q0 4 4 4t4-4"/></svg>
 </div>
</footer>
<script>
// TrueCrypt's dot-matrix T: lit dots are 1
const rows=["01110","10001","01110","00100","00100","00100","01100"];
document.getElementById("dots").innerHTML=rows.map((r,y)=>[...r].map((c,x)=>`<circle cx="${54+x*10}" cy="${17+y*10}" r="4.200" fill="${c==="1"?"#fff":"#2f62dc"}"/>`).join("")).join("");
</script>
</body>
</html>
